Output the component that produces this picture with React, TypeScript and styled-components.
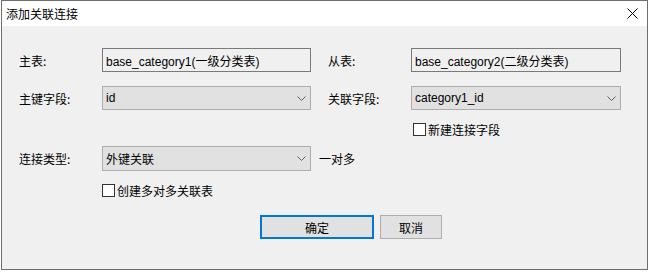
import React from 'react'
import styled, { createGlobalStyle } from 'styled-components'

const GlobalStyle = createGlobalStyle`
  html, body {
    margin: 0;
    padding: 0;
    background: #ffffff;
  }
  body {
    font-family: 'Liberation Sans', 'Noto Sans CJK SC', sans-serif;
    font-size: 12px;
    color: #000;
  }
`

const Window = styled.div`
  box-sizing: border-box;
  margin-left: 1px;
  width: 647px;
  height: 270px;
  border: 1px solid #6e6e6e;
  background: #f0f0f0;
  display: flex;
  flex-direction: column;
`

const TitleBar = styled.div`
  height: 25px;
  background: #ffffff;
  display: flex;
  align-items: center;
  justify-content: space-between;
  padding: 0 9px 0 4px;
  font-family: 'Noto Sans CJK SC', sans-serif;
  font-size: 12px;
  color: #000;
`

const CloseButton = styled.div`
  width: 12px;
  height: 12px;
  display: flex;
  align-items: center;
  justify-content: center;
`

const Body = styled.div`
  flex: 1;
  padding: 0 0 0 17px;
  display: flex;
  flex-direction: column;
`

const Row = styled.div<{ $top: number; $h: number; $indent?: number }>`
  display: flex;
  align-items: center;
  height: ${({ $h }) => $h}px;
  margin-top: ${({ $top }) => $top}px;
  padding-left: ${({ $indent }) => $indent ?? 0}px;
  gap: 17px;
`

const Pair = styled.div`
  display: flex;
  align-items: center;
`

const Label = styled.span`
  width: 83px;
  font-family: 'Noto Sans CJK SC', sans-serif;
  font-size: 12px;
`

const TextBox = styled.div<{ $w: number }>`
  box-sizing: border-box;
  width: ${({ $w }) => $w}px;
  height: 24px;
  border: 1px solid #7a7a7a;
  background: #f0f0f0;
  display: flex;
  align-items: center;
  padding-left: 3px;
  font-family: 'Liberation Sans', 'Noto Sans CJK SC', sans-serif;
  font-size: 12px;
  white-space: nowrap;
`

const Select = styled.div<{ $w: number; $h?: number }>`
  box-sizing: border-box;
  width: ${({ $w }) => $w}px;
  height: ${({ $h }) => $h ?? 24}px;
  border: 1px solid #adadad;
  background: #e1e1e1;
  display: flex;
  align-items: center;
  justify-content: space-between;
  padding: 0 4px 0 3px;
  font-family: 'Liberation Sans', 'Noto Sans CJK SC', sans-serif;
  font-size: 12px;
`

const Note = styled.span`
  margin-left: 8px;
  font-family: 'Noto Sans CJK SC', sans-serif;
  font-size: 12px;
`

const Check = styled.label`
  display: flex;
  align-items: center;
  gap: 2px;
  font-family: 'Noto Sans CJK SC', sans-serif;
  font-size: 12px;
`

const Box = styled.span`
  box-sizing: border-box;
  width: 13px;
  height: 13px;
  border: 1px solid #333;
  background: #fff;
`

const Buttons = styled.div`
  display: flex;
  gap: 6px;
  margin-top: 18px;
  padding-left: 241px;
`

const Button = styled.div<{ $w: number; $primary?: boolean }>`
  box-sizing: border-box;
  width: ${({ $w }) => $w}px;
  height: 24px;
  background: #e1e1e1;
  border: ${({ $primary }) => ($primary ? '2px solid #0078d7' : '1px solid #adadad')};
  display: flex;
  align-items: center;
  justify-content: center;
  font-family: 'Noto Sans CJK SC', sans-serif;
  font-size: 12px;
`

function Chevron() {
  return (
    <svg width="9" height="5" viewBox="0 0 9 5">
      <path d="M0.5 0.5 L4.5 4.5 L8.5 0.5" fill="none" stroke="#606060" strokeWidth="1" />
    </svg>
  )
}

export default function App() {
  return (
    <>
      <GlobalStyle />
      <Window>
        <TitleBar>
          <span>添加关联连接</span>
          <CloseButton>
            <svg width="11" height="11" viewBox="0 0 11 11">
              <path d="M0.5 0.5 L10.5 10.5 M10.5 0.5 L0.5 10.5" stroke="#000" strokeWidth="1" />
            </svg>
          </CloseButton>
        </TitleBar>
        <Body>
          <Row $top={22} $h={24}>
            <Pair>
              <Label>主表:</Label>
              <TextBox $w={209}>base_category1(一级分类表)</TextBox>
            </Pair>
            <Pair>
              <Label>从表:</Label>
              <TextBox $w={210}>base_category2(二级分类表)</TextBox>
            </Pair>
          </Row>
          <Row $top={14} $h={24}>
            <Pair>
              <Label>主键字段:</Label>
              <Select $w={209}>
                <span>id</span>
                <Chevron />
              </Select>
            </Pair>
            <Pair>
              <Label>关联字段:</Label>
              <Select $w={210}>
                <span>category1_id</span>
                <Chevron />
              </Select>
            </Pair>
          </Row>
          <Row $top={13} $h={13} $indent={394}>
            <Check>
              <Box />
              新建连接字段
            </Check>
          </Row>
          <Row $top={10} $h={25}>
            <Pair>
              <Label>连接类型:</Label>
              <Select $w={209} $h={25}>
                <span>外键关联</span>
                <Chevron />
              </Select>
              <Note>一对多</Note>
            </Pair>
          </Row>
          <Row $top={13} $h={13} $indent={83}>
            <Check>
              <Box />
              创建多对多关联表
            </Check>
          </Row>
          <Buttons>
            <Button $w={114} $primary>确定</Button>
            <Button $w={62}>取消</Button>
          </Buttons>
        </Body>
      </Window>
    </>
  )
}
